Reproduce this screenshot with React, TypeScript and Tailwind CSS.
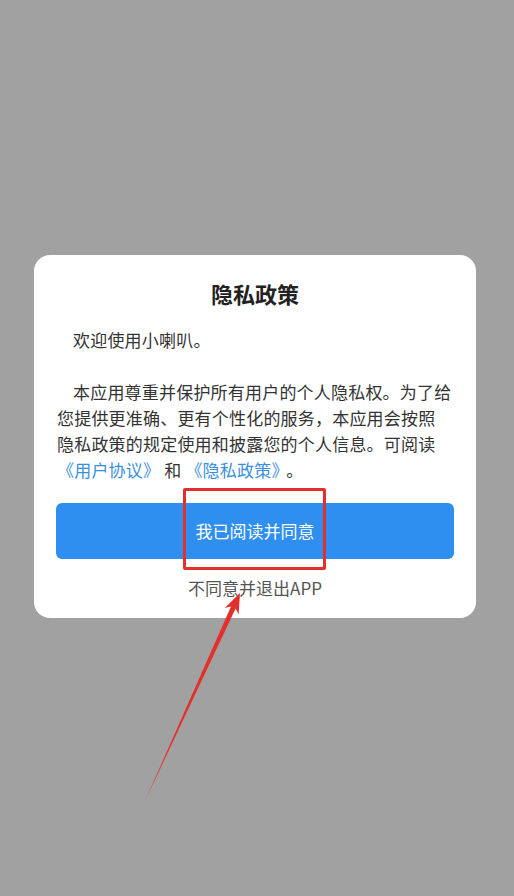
const font = "font-['Noto_Sans_CJK_SC','Noto_Sans',sans-serif]";

function Annotation() {
  return (
    <>
      <div className="pointer-events-none absolute left-[183px] top-[488px] h-[82px] w-[143px] rounded-[2px] border-[3px] border-[#e3302c]" />
      <svg
        className="pointer-events-none absolute left-0 top-0"
        width="514"
        height="896"
        viewBox="0 0 514 896"
        aria-hidden="true"
      >
        <polygon
          points="145,801 235.6,608.5 238.6,614.6 240,593 224.8,608.1 231,606.5"
          fill="#e3302c"
        />
      </svg>
    </>
  );
}

export default function App() {
  return (
    <div className={`relative h-[896px] w-[514px] overflow-hidden bg-[#a1a1a1] ${font}`}>
      <div className="pl-[34px] pt-[255px]">
        <div className="flex w-[442px] flex-col rounded-[16px] bg-white pb-[18px] pt-[23px]">
          <h1 className="text-center text-[22px] font-bold leading-[30px] text-[#222]">隐私政策</h1>

          <div className="mt-[19px] px-[23px] text-[17px] leading-[26px] tracking-[0.2px] text-[#333]">
            <p className="pl-[16px]">欢迎使用小喇叭。</p>
            <p className="h-[26px]" />
            <p className="whitespace-nowrap pl-[16px]">本应用尊重并保护所有用户的个人隐私权。为了给</p>
            <p className="whitespace-nowrap">您提供更准确、更有个性化的服务，本应用会按照</p>
            <p className="whitespace-nowrap">隐私政策的规定使用和披露您的个人信息。可阅读</p>
            <p className="whitespace-nowrap">
              <span className="text-[#3b8fe0]">《用户协议》</span>
              <span> 和 </span>
              <span className="text-[#3b8fe0]">《隐私政策》</span>
              <span className="ml-[6px]">。</span>
            </p>
          </div>

          <button className="mx-[22px] mt-[20px] flex h-[56px] items-center justify-center rounded-[6px] bg-[#2f8ff0] text-[17px] text-white">
            我已阅读并同意
          </button>

          <p className="mt-[17px] text-center text-[17px] leading-[24px] text-[#555]">不同意并退出APP</p>
        </div>
      </div>
      <Annotation />
    </div>
  );
}
